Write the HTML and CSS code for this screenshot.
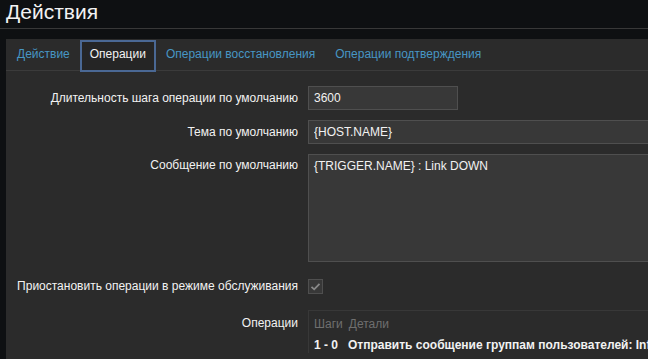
FILE: index.html
```html
<!DOCTYPE html>
<html lang="ru">
<head>
  <meta charset="UTF-8">
  <title>Действия</title>
  <link rel="stylesheet" href="styles.css">
</head>
<body>
  <header class="page-header">
    <h1>Действия</h1>
  </header>

  <div class="panel">
    <ul class="tabs">
      <li class="tab"><a href="#">Действие</a></li>
      <li class="tab active"><a href="#">Операции</a></li>
      <li class="tab"><a href="#">Операции восстановления</a></li>
      <li class="tab"><a href="#">Операции подтверждения</a></li>
    </ul>

    <form class="form-grid">
      <label class="form-label">Длительность шага операции по умолчанию</label>
      <div class="form-field"><input type="text" class="input input-short" value="3600"></div>

      <label class="form-label">Тема по умолчанию</label>
      <div class="form-field"><input type="text" class="input input-wide" value="{HOST.NAME}"></div>

      <label class="form-label label-top">Сообщение по умолчанию</label>
      <div class="form-field"><textarea class="input input-wide textarea">{TRIGGER.NAME} : Link DOWN</textarea></div>

      <label class="form-label row-check">Приостановить операции в режиме обслуживания</label>
      <div class="form-field row-check">
        <span class="checkbox">
          <svg width="13" height="13" viewBox="0 0 13 13"><path d="M2.5 6.8 L5.2 9.3 L10.5 3.8" fill="none" stroke="#8a8a8a" stroke-width="1.8"/></svg>
        </span>
      </div>

      <label class="form-label label-ops">Операции</label>
      <div class="form-field">
        <div class="ops-box">
          <div class="ops-head"><span>Шаги</span><span>Детали</span></div>
          <div class="ops-row"><span>1 - 0</span><span>Отправить сообщение группам пользователей: Infrastructure</span></div>
        </div>
      </div>
    </form>
  </div>
</body>
</html>
```

FILE: styles.css
```css
html, body {
  height: 100%;
}
body {
  margin: 0;
  background: #0e1012;
  font-family: "Liberation Sans", Arial, sans-serif;
  font-size: 12px;
  color: #f2f2f2;
  overflow: hidden;
}
.page-header {
  height: 28px;
  border-bottom: 1px solid #383838;
  padding: 0 6px;
}
.page-header h1 {
  margin: 0;
  font-size: 21px;
  font-weight: normal;
  line-height: 23px;
  color: #f2f2f2;
}
.panel {
  margin: 10px 0 0 6px;
  background: #2b2b2b;
  height: calc(100% - 39px);
  overflow: hidden;
}
.tabs {
  display: flex;
  align-items: flex-start;
  list-style: none;
  margin: 0;
  padding: 0 0 0 1px;
  height: 31px;
  border-bottom: 1px solid #3b3b3b;
}
.tab a {
  display: block;
  padding: 0 10px;
  line-height: 31px;
  color: #4796c4;
  text-decoration: none;
}
.tab.active {
  box-sizing: border-box;
  height: 32px;
  margin-top: 1px;
  border: 2px solid #4a6894;
  background: #252525;
}
.tab.active a {
  padding: 0 8px;
  line-height: 25px;
  color: #f2f2f2;
}
.form-grid {
  display: grid;
  grid-template-columns: 292px minmax(0, 1fr);
  column-gap: 10px;
  row-gap: 10px;
  padding-top: 15px;
}
.form-field {
  min-width: 0;
}
.form-label {
  text-align: right;
  line-height: 24px;
}
.label-top {
  line-height: 22px;
}
.row-check {
  height: 28px;
  display: flex;
  align-items: center;
  justify-content: flex-end;
}
.form-field.row-check {
  justify-content: flex-start;
}
.label-ops {
  line-height: 26px;
}
.input {
  box-sizing: border-box;
  height: 24px;
  padding: 0 5px;
  background: #383838;
  border: 1px solid #4f4f4f;
  color: #f2f2f2;
  font-family: "Liberation Sans", Arial, sans-serif;
  font-size: 12px;
  outline: none;
  display: block;
}
.input-short {
  width: 150px;
}
.input-wide {
  width: 480px;
}
.textarea {
  height: 108px;
  padding: 4px 5px;
  line-height: 14px;
  resize: none;
}
.checkbox {
  box-sizing: border-box;
  width: 15px;
  height: 15px;
  border: 1px solid #4f4f4f;
  background: #383838;
  display: flex;
  align-items: center;
  justify-content: center;
}
.ops-box {
  width: 480px;
  border: 1px solid #383838;
  border-right: none;
  border-bottom: none;
  padding: 5px 5px 0;
}
.ops-head {
  display: flex;
  gap: 6px;
  color: #6f6f6f;
  line-height: 16px;
}
.ops-row {
  display: flex;
  gap: 10px;
  margin-top: 5px;
  font-weight: bold;
  line-height: 16px;
  white-space: nowrap;
}
```
